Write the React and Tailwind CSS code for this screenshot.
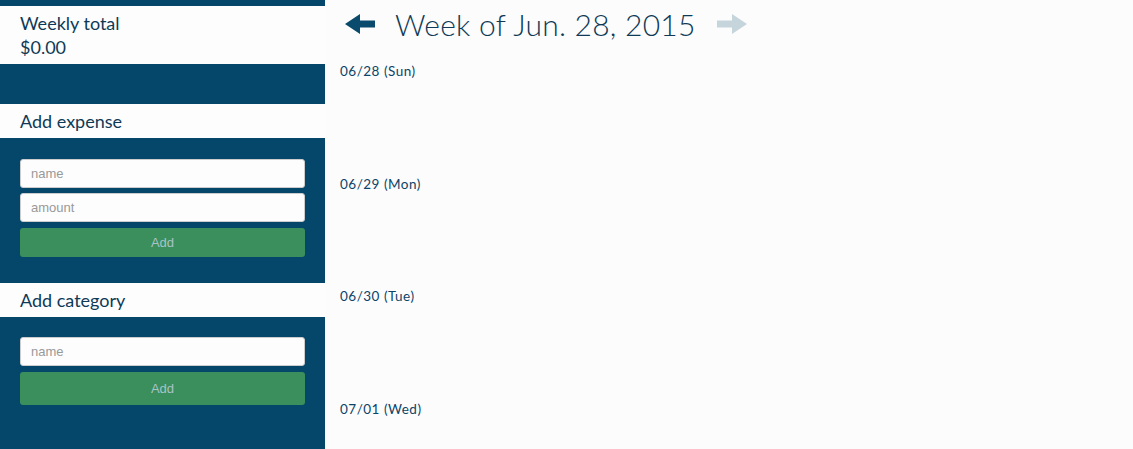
import React from 'react'

const days = ['06/28 (Sun)', '06/29 (Mon)', '06/30 (Tue)', '07/01 (Wed)']

function Arrow({ dir, color }) {
  const d = dir === 'left'
    ? 'M0 10 L15 0 L15 6.5 L30 6.5 L30 13.5 L15 13.5 L15 20 Z'
    : 'M30 10 L15 0 L15 6.5 L0 6.5 L0 13.5 L15 13.5 L15 20 Z'
  return (
    <svg width="30" height="20" viewBox="0 0 30 20">
      <path d={d} fill={color} />
    </svg>
  )
}

function Field({ placeholder }) {
  return (
    <input
      placeholder={placeholder}
      className="h-[29px] w-full rounded-[3px] border border-[#cccccc] bg-[#fdfdfd] px-[10px] text-[13px] text-[#555] placeholder:text-[#999] outline-none"
      style={{ fontFamily: '"Liberation Sans", Arial, sans-serif' }}
    />
  )
}

function AddButton({ h }) {
  return (
    <button
      className={`w-full rounded-[3px] bg-[#3a8f5c] text-[13px] text-[#a9c3c6] ${h}`}
      style={{ fontFamily: '"Liberation Sans", Arial, sans-serif' }}
    >
      Add
    </button>
  )
}

function SectionTitle({ children }) {
  return (
    <div className="flex h-[34px] items-center bg-[#fdfdfd] px-5 text-[18px] text-[#0e3a57]">
      {children}
    </div>
  )
}

export default function App() {
  return (
    <div className="flex h-[449px] w-[1133px] overflow-hidden bg-[#fcfcfc]" style={{ fontFamily: 'Lato, "Open Sans", sans-serif' }}>
      {/* sidebar */}
      <div className="flex w-[325px] shrink-0 flex-col bg-[#04476a]">
        <div className="mt-[6px] flex h-[58px] flex-col justify-center bg-[#fdfdfd] px-5 text-[18px] leading-[24px] text-[#0e3a57]">
          <div>Weekly total</div>
          <div>$0.00</div>
        </div>
        <div className="h-[40px]" />
        <SectionTitle>Add expense</SectionTitle>
        <div className="flex flex-col gap-[5px] px-5 pt-[21px] pb-[26px]">
          <Field placeholder="name" />
          <Field placeholder="amount" />
          <div className="mt-[1px]"><AddButton h="h-[29px]" /></div>
        </div>
        <SectionTitle>Add category</SectionTitle>
        <div className="flex flex-col gap-[6px] px-5 pt-[20px]">
          <Field placeholder="name" />
          <AddButton h="h-[33px]" />
        </div>
      </div>

      {/* main */}
      <div className="flex-1 pl-[15px]">
        <div className="flex h-[48px] items-center pl-[5px]">
          <Arrow dir="left" color="#0a4a6c" />
          <div className="ml-[20px] text-[30px] font-light tracking-[0.25px] text-[#0e3a57]">Week of Jun. 28, 2015</div>
          <div className="ml-[21px]"><Arrow dir="right" color="#c6d4dc" /></div>
        </div>
        <div className="mt-[14px] flex flex-col">
          {days.map((d) => (
            <div key={d} className="h-[112.7px] text-[13.5px] leading-[18px] tracking-[0.5px] text-[#0b4468]">{d}</div>
          ))}
        </div>
      </div>
    </div>
  )
}
